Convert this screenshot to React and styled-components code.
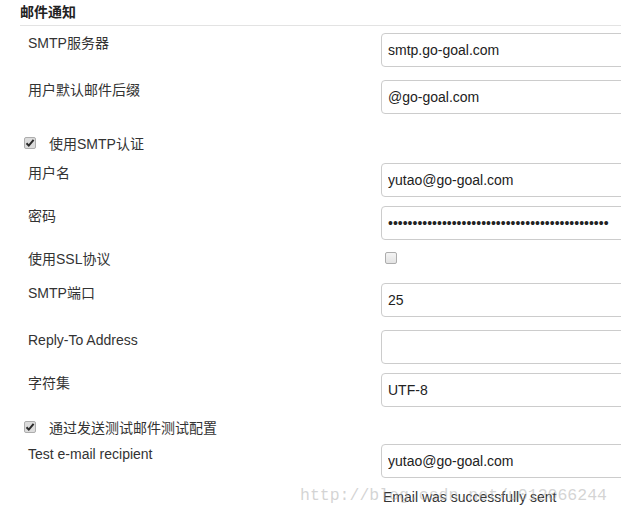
import React from 'react';
import styled, { createGlobalStyle } from 'styled-components';

const GlobalStyle = createGlobalStyle`
  html, body {
    margin: 0;
    padding: 0;
    background: #fff;
    overflow: hidden;
  }
`;

const Page = styled.div`
  position: relative;
  width: 621px;
  height: 516px;
  overflow: hidden;
  padding-left: 20px;
  box-sizing: border-box;
  font-family: 'Liberation Sans', 'Noto Sans CJK SC', Arial, sans-serif;
  font-size: 14px;
  color: #333;
`;

const Section = styled.div`
  border-bottom: 1px solid #e3e3e3;
  height: 25px;
  line-height: 24px;
  font-weight: bold;
  color: #222;
`;

const Row = styled.div`
  display: grid;
  grid-template-columns: 353px 300px;
  align-items: start;
  margin-top: ${props => props.$top}px;
  padding-left: 8px;
`;

const Label = styled.div`
  line-height: 20px;
`;

const CheckRow = styled.label`
  display: flex;
  align-items: center;
  gap: 13px;
  height: 20px;
  margin-top: ${props => props.$top}px;
  padding-left: 4px;
`;

const Input = styled.input`
  box-sizing: border-box;
  width: 300px;
  height: 34px;
  padding: 0 6px;
  border: 1px solid #ccc;
  border-radius: 4px;
  font-family: 'Liberation Sans', Arial, sans-serif;
  font-size: 14px;
  color: #222;
  background: #fff;
  outline: none;
`;

const Box = styled.span`
  display: inline-flex;
  align-items: center;
  justify-content: center;
  box-sizing: border-box;
  width: 12px;
  height: 12px;
  border: 1px solid #adadad;
  border-radius: 2px;
  background: ${props => (props.$checked ? '#dcdcdc' : 'linear-gradient(#f4f4f4, #e3e3e3)')};
  margin-top: ${props => props.$offset || 0}px;
  margin-left: ${props => props.$indent || 0}px;
`;

const Message = styled.div`
  margin-top: 9px;
  margin-left: 363px;
  line-height: 20px;
  color: #333;
`;

const Watermark = styled.div`
  position: absolute;
  left: 300px;
  top: 486px;
  font-family: 'Liberation Mono', 'Courier New', monospace;
  font-size: 16.5px;
  color: rgba(170, 170, 170, 0.5);
  white-space: nowrap;
  pointer-events: none;
`;

const Checkbox = ({ checked, offset, indent }) => (
  <Box $checked={checked} $offset={offset} $indent={indent}>
    {checked && (
      <svg width="10" height="10" viewBox="0 0 10 10">
        <path d="M1.5 5.2 L3.8 7.6 L8.6 1.8" fill="none" stroke="#2b2b2b" strokeWidth="2" />
      </svg>
    )}
  </Box>
);

const Field = ({ top, label, value, type = 'text' }) => (
  <Row $top={top}>
    <Label>{label}</Label>
    <Input type={type} defaultValue={value} readOnly />
  </Row>
);

const App = () => (
  <>
    <GlobalStyle />
    <Page>
      <Section>邮件通知</Section>
      <Field top={7} label="SMTP服务器" value="smtp.go-goal.com" />
      <Field top={13} label="用户默认邮件后缀" value="@go-goal.com" />
      <CheckRow $top={19}>
        <Checkbox checked offset={-1} />
        使用SMTP认证
      </CheckRow>
      <Field top={10} label="用户名" value="yutao@go-goal.com" />
      <Field top={9} label="密码" type="password" value={'x'.repeat(45)} />
      <Row $top={9}>
        <Label>使用SSL协议</Label>
        <Checkbox offset={3} indent={4} />
      </Row>
      <Field top={14} label="SMTP端口" value="25" />
      <Field top={13} label="Reply-To Address" value="" />
      <Field top={9} label="字符集" value="UTF-8" />
      <CheckRow $top={10}>
        <Checkbox checked offset={-1} />
        通过发送测试邮件测试配置
      </CheckRow>
      <Field top={7} label="Test e-mail recipient" value="yutao@go-goal.com" />
      <Message>Email was successfully sent</Message>
      <Watermark>http://blog.csdn.net/u012066244</Watermark>
    </Page>
  </>
);

export default App;
